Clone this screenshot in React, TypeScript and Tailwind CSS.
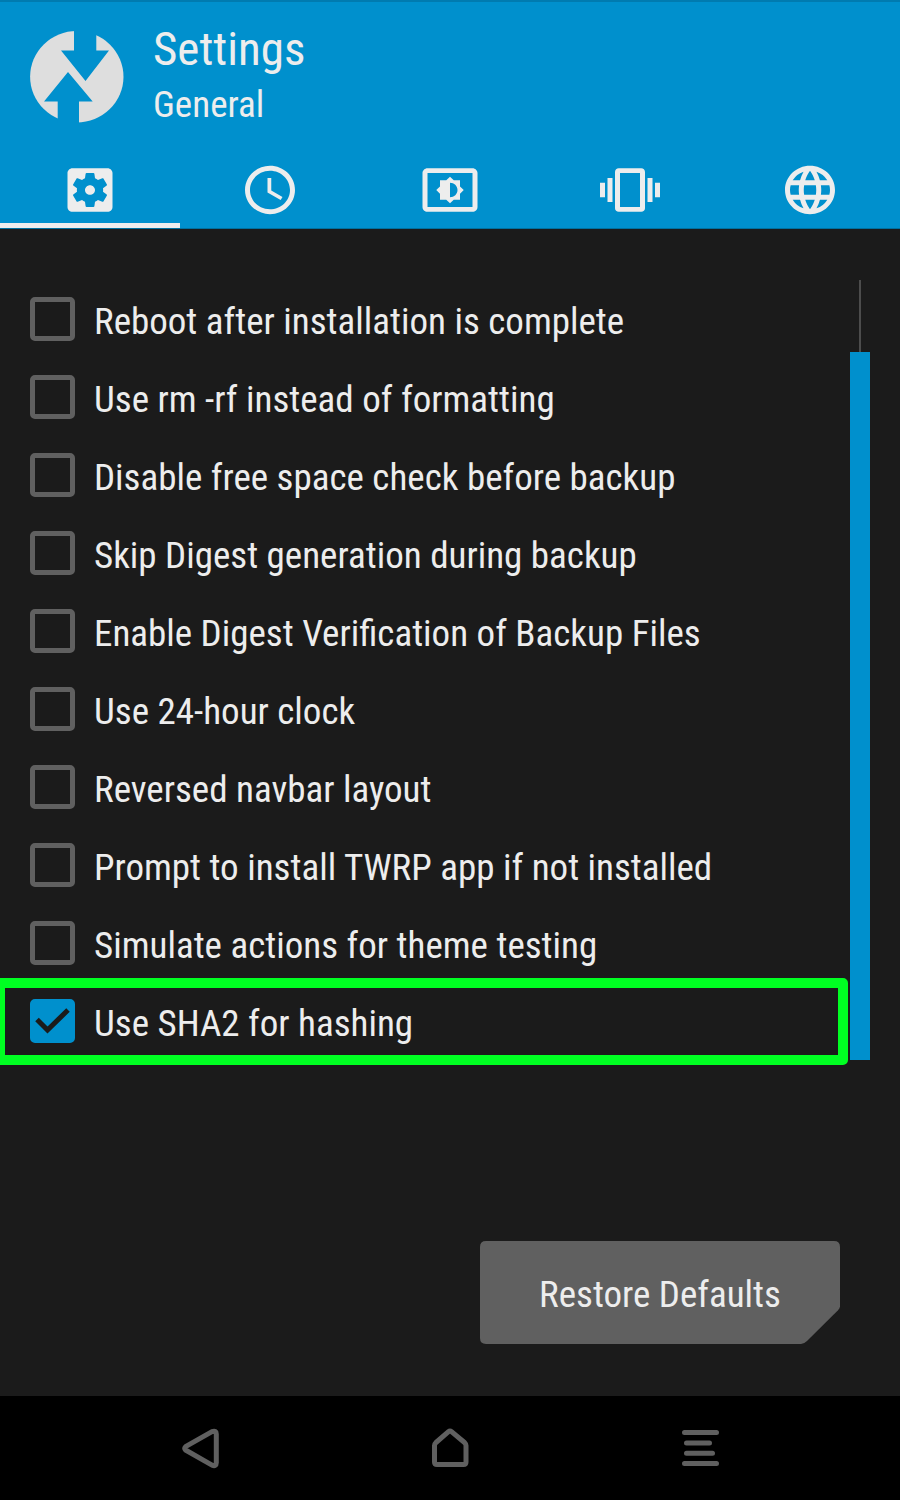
import { useState } from "react";
import type { ComponentType, SVGProps } from "react";
import { MdLanguage, MdSchedule, MdSettingsBrightness, MdVibration } from "react-icons/md";

type Icon = ComponentType<SVGProps<SVGSVGElement>>;

function SettingsGear(props: SVGProps<SVGSVGElement>) {
  return (
    <svg viewBox="0 0 24 24" fill="currentColor" {...props}>
      <path d="M12 10c-1.1 0-2 .9-2 2s.9 2 2 2 2-.9 2-2-.9-2-2-2zm7-7H5c-1.11 0-2 .9-2 2v14c0 1.1.89 2 2 2h14c1.11 0 2-.9 2-2V5c0-1.1-.89-2-2-2zm-1.75 9c0 .23-.02.46-.05.68l1.48 1.16c.13.11.17.3.08.45l-1.4 2.42c-.09.15-.27.21-.43.15l-1.74-.7c-.36.28-.76.51-1.18.69l-.26 1.85c-.03.17-.18.3-.35.3h-2.8c-.17 0-.32-.13-.35-.29l-.26-1.85c-.43-.18-.82-.41-1.18-.69l-1.74.7c-.16.06-.34 0-.43-.15l-1.4-2.42c-.09-.15-.05-.34.08-.45l1.48-1.16c-.03-.23-.05-.46-.05-.69 0-.23.02-.46.05-.68l-1.48-1.16c-.13-.11-.17-.3-.08-.45l1.4-2.42c.09-.15.27-.21.43-.15l1.74.7c.36-.28.76-.51 1.18-.69l.26-1.85c.03-.17.18-.3.35-.3h2.8c.17 0 .32.13.35.29l.26 1.85c.43.18.82.41 1.18.69l1.74-.7c.16-.06.34 0 .43.15l1.4 2.42c.09.15.05.34-.08.45l-1.48 1.16c.03.23.05.46.05.69z" />
    </svg>
  );
}

const tabs: { label: string; icon: Icon }[] = [
  { label: "General", icon: SettingsGear },
  { label: "Time zone", icon: MdSchedule as Icon },
  { label: "Screen", icon: MdSettingsBrightness as Icon },
  { label: "Vibration", icon: MdVibration as Icon },
  { label: "Language", icon: MdLanguage as Icon },
];

const options = [
  "Reboot after installation is complete",
  "Use rm -rf instead of formatting",
  "Disable free space check before backup",
  "Skip Digest generation during backup",
  "Enable Digest Verification of Backup Files",
  "Use 24-hour clock",
  "Reversed navbar layout",
  "Prompt to install TWRP app if not installed",
  "Simulate actions for theme testing",
  "Use SHA2 for hashing",
];

const highlighted = "Use SHA2 for hashing";

function Logo() {
  return (
    <svg viewBox="0 0 94 92" className="h-[92px] w-[94px] shrink-0" aria-hidden="true">
      <ellipse cx="46.8" cy="45.7" rx="46.7" ry="45.7" fill="#dedede" />
      <path d="M44 0V19.5H31L55.5 50L79 19.5H66.3V0Z" fill="#0090cd" />
      <path d="M38 41L14 70.5H27.7V92H49V70.5H62.7Z" fill="#0090cd" />
    </svg>
  );
}

function Option({ label, index }: { label: string; index: number }) {
  const [checked, setChecked] = useState(label === highlighted);
  const id = `option-${index}`;
  return (
    <li className="relative flex h-[78px] items-center gap-[19px] pl-[30px]">
      {label === highlighted && (
        <span className="pointer-events-none absolute -top-1 -bottom-[5px] -left-[5px] right-[2px] rounded-[5px] border-10 border-[#00ff22]" />
      )}
      <span className="grid shrink-0 place-items-center">
        <input
          id={id}
          type="checkbox"
          checked={checked}
          onChange={(e) => setChecked(e.target.checked)}
          className="col-start-1 row-start-1 h-11 w-[45px] appearance-none rounded-[5px] border-5 border-[#606060] checked:border-[#0090cd] checked:bg-[#0090cd]"
        />
        {checked && (
          <svg viewBox="0 0 45 44" className="pointer-events-none col-start-1 row-start-1 h-11 w-[45px]" aria-hidden="true">
            <path d="M7 20.5L17.5 31L38 11" fill="none" stroke="#1b1b1b" strokeWidth="5" />
          </svg>
        )}
      </span>
      <label htmlFor={id} className="pt-[5px] text-[37px] leading-10 whitespace-nowrap">
        {label}
      </label>
    </li>
  );
}

export default function App() {
  return (
    <div className="flex min-h-screen flex-col bg-[#1b1b1b] font-['Roboto_Condensed','Roboto',sans-serif] text-[#ededed]">
      <header className="border-t-2 border-b border-t-[#007bb0] border-b-[#00709f] bg-[#0090cd]">
        <div className="flex h-[149px] items-center gap-[29px] pl-[30px]">
          <Logo />
          <div className="flex flex-col">
            <h1 className="text-[47px] leading-[56px]">Settings</h1>
            <p className="text-[37px] leading-[56px]">General</p>
          </div>
        </div>
        <nav className="grid grid-cols-5">
          {tabs.map(({ label, icon: TabIcon }, i) => (
            <button
              key={label}
              type="button"
              aria-label={label}
              className={`flex h-[77px] justify-center border-b-5 pt-[10px] ${i === 0 ? "border-[#ededed]" : "border-transparent"}`}
            >
              <TabIcon className="h-[58px] w-[60px]" preserveAspectRatio="none" />
            </button>
          ))}
        </nav>
      </header>

      <main className="flex flex-1 flex-col">
        <div className="flex pt-[51px] pr-[30px]">
          <ul className="min-w-0 flex-1">
            {options.map((label, i) => (
              <Option key={label} label={label} index={i} />
            ))}
          </ul>
          <div className="flex w-5 flex-col items-center">
            <div className="h-[72px] w-[2px] bg-[#4c4c4c]" />
            <div className="w-full flex-1 bg-[#0090cd]" />
          </div>
        </div>
        <div className="mt-auto flex justify-end pr-[60px] pb-[52px]">
          <button type="button" className="grid h-[103px] w-[360px] place-items-center">
            <svg viewBox="0 0 360 104" preserveAspectRatio="none" className="col-start-1 row-start-1 h-[103px] w-full" aria-hidden="true">
              <path d="M6 0H354Q360 0 360 6V66Q360 68 358 70L327 101Q324 104 321 104H6Q0 104 0 98V6Q0 0 6 0Z" fill="#606060" />
            </svg>
            <span className="col-start-1 row-start-1 pt-[5px] text-[37px] leading-10">Restore Defaults</span>
          </button>
        </div>
      </main>

      <footer className="flex h-[104px] items-center justify-center gap-[190px] bg-black text-[#606060]">
        <button type="button" aria-label="Back">
          <svg viewBox="0 0 60 60" className="size-[60px]" fill="none" stroke="currentColor" strokeWidth="5" strokeLinejoin="round">
            <path d="M15.5 28.7L42 13.6Q46.3 12 46.3 16V44.8Q46.3 48.8 42 47.2L15.5 32Q13.8 30.3 15.5 28.7Z" />
          </svg>
        </button>
        <button type="button" aria-label="Home">
          <svg viewBox="0 0 60 60" className="size-[60px]" fill="none" stroke="currentColor" strokeWidth="5" strokeLinejoin="round">
            <path d="M14.5 27.5Q14.5 26 16 24.5L28.5 13.7Q30 12.4 31.5 13.7L44.5 24.5Q46 26 46 27.5V44Q46 46.5 43.5 46.5H17Q14.5 46.5 14.5 44Z" />
          </svg>
        </button>
        <button type="button" aria-label="Console">
          <svg viewBox="0 0 60 60" className="size-[60px]" fill="none" stroke="currentColor" strokeWidth="5" strokeLinecap="round">
            <path d="M14.5 14.5H46.5M16.5 25H39.5M16.5 35.2H42.5M14.5 45.5H46.5" />
          </svg>
        </button>
      </footer>
    </div>
  );
}
